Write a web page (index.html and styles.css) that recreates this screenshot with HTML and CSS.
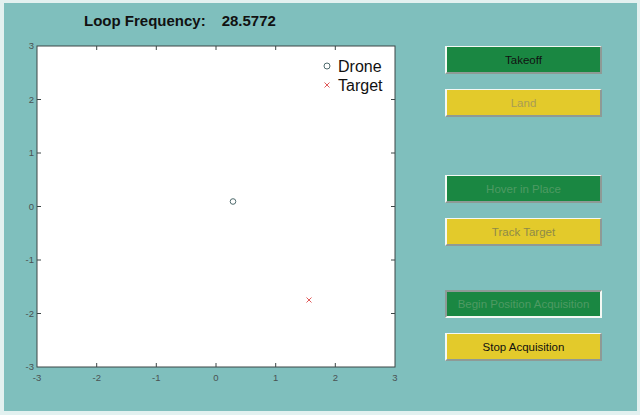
FILE: index.html
```html
<!DOCTYPE html>
<html>
<head>
<meta charset="utf-8">
<link rel="stylesheet" href="styles.css">
</head>
<body>
<div class="window">
  <div class="header">
    <span class="label">Loop Frequency:</span>
    <span class="value">28.5772</span>
  </div>
  <div class="main">
    <svg class="plot" width="416" height="345" viewBox="0 0 416 345">
      <rect x="33" y="6" width="358" height="321" fill="#ffffff" stroke="#3c4646" stroke-width="1"/>
      <g stroke="#3c4646" stroke-width="1">
        <line x1="92.7" y1="327" x2="92.7" y2="323"/>
        <line x1="152.3" y1="327" x2="152.3" y2="323"/>
        <line x1="212" y1="327" x2="212" y2="323"/>
        <line x1="271.7" y1="327" x2="271.7" y2="323"/>
        <line x1="331.3" y1="327" x2="331.3" y2="323"/>
        <line x1="92.7" y1="6" x2="92.7" y2="10"/>
        <line x1="152.3" y1="6" x2="152.3" y2="10"/>
        <line x1="212" y1="6" x2="212" y2="10"/>
        <line x1="271.7" y1="6" x2="271.7" y2="10"/>
        <line x1="331.3" y1="6" x2="331.3" y2="10"/>
        <line x1="33" y1="59.5" x2="37" y2="59.5"/>
        <line x1="33" y1="113" x2="37" y2="113"/>
        <line x1="33" y1="166.5" x2="37" y2="166.5"/>
        <line x1="33" y1="220" x2="37" y2="220"/>
        <line x1="33" y1="273.5" x2="37" y2="273.5"/>
        <line x1="391" y1="59.5" x2="387" y2="59.5"/>
        <line x1="391" y1="113" x2="387" y2="113"/>
        <line x1="391" y1="166.5" x2="387" y2="166.5"/>
        <line x1="391" y1="220" x2="387" y2="220"/>
        <line x1="391" y1="273.5" x2="387" y2="273.5"/>
      </g>
      <g class="ticklabel" text-anchor="end">
        <text x="30" y="9">3</text>
        <text x="30" y="62.5">2</text>
        <text x="30" y="116">1</text>
        <text x="30" y="169.5">0</text>
        <text x="30" y="223">-1</text>
        <text x="30" y="276.5">-2</text>
        <text x="30" y="330">-3</text>
      </g>
      <g class="ticklabel" text-anchor="middle">
        <text x="33" y="341">-3</text>
        <text x="92.7" y="341">-2</text>
        <text x="152.3" y="341">-1</text>
        <text x="212" y="341">0</text>
        <text x="271.7" y="341">1</text>
        <text x="331.3" y="341">2</text>
        <text x="391" y="341">3</text>
      </g>
      <circle cx="229" cy="161.5" r="2.8" fill="none" stroke="#4f6b6d" stroke-width="1"/>
      <g stroke="#e05a5a" stroke-width="1">
        <line x1="302.5" y1="257.5" x2="307.5" y2="262.5"/>
        <line x1="307.5" y1="257.5" x2="302.5" y2="262.5"/>
      </g>
      <circle cx="323" cy="26" r="3" fill="none" stroke="#4f6b6d" stroke-width="1"/>
      <text class="legend" x="334" y="32">Drone</text>
      <g stroke="#e05a5a" stroke-width="1">
        <line x1="320.5" y1="42.5" x2="325.5" y2="47.5"/>
        <line x1="325.5" y1="42.5" x2="320.5" y2="47.5"/>
      </g>
      <text class="legend" x="334" y="51">Target</text>
    </svg>
    <div class="controls">
      <div class="group g1">
        <div class="btn green active">Takeoff</div>
        <div class="btn yellow disabled-y">Land</div>
      </div>
      <div class="group g2">
        <div class="btn green disabled-g">Hover in Place</div>
        <div class="btn yellow disabled-y2">Track Target</div>
      </div>
      <div class="group g3">
        <div class="btn green disabled-g pressed">Begin Position Acquisition</div>
        <div class="btn yellow active">Stop Acquisition</div>
      </div>
    </div>
  </div>
</div>
</body>
</html>
```

FILE: styles.css
```css
html, body {
  margin: 0;
  padding: 0;
  background: #e3f1f0;
}
.window {
  box-sizing: border-box;
  width: 640px;
  height: 415px;
  border-left: 4px solid #e3f1f0;
  border-top: 3px solid #e3f1f0;
  border-right: 3px solid #e3f1f0;
  border-bottom: 4px solid #e3f1f0;
  background: #7fbfbd;
  display: flex;
  flex-direction: column;
  font-family: "Liberation Sans", Arial, sans-serif;
}
.header {
  height: 37px;
  display: flex;
  align-items: center;
  padding-left: 80px;
  padding-bottom: 3px;
  box-sizing: border-box;
  font-weight: bold;
  font-size: 15px;
  color: #111;
}
.header .value {
  margin-left: 16px;
}
.main {
  display: flex;
  flex-direction: row;
}
.plot {
  display: block;
  overflow: visible;
  flex: none;
}
.ticklabel text {
  font-family: "Liberation Sans", Arial, sans-serif;
  font-size: 9.5px;
  fill: #4a5252;
}
.legend {
  font-family: "Liberation Sans", Arial, sans-serif;
  font-size: 16px;
  fill: #111;
}
.controls {
  margin-left: 25px;
  padding-top: 6px;
  display: flex;
  flex-direction: column;
}
.group {
  display: flex;
  flex-direction: column;
  gap: 15px;
}
.g2 { margin-top: 58px; }
.g3 { margin-top: 44px; }
.btn {
  box-sizing: border-box;
  width: 157px;
  height: 28px;
  display: flex;
  align-items: center;
  justify-content: center;
  font-size: 11.5px;
  border-top: 1px solid #f4f8f4;
  border-left: 2px solid #f4f8f4;
  border-bottom: 2px solid #8e9a96;
  border-right: 2px solid #8e9a96;
}
.btn.pressed {
  border-top: 2px solid #8e9a96;
  border-left: 2px solid #8e9a96;
  border-bottom: 2px solid #f4f8f4;
  border-right: 2px solid #f4f8f4;
}
.green { background: #1a8742; }
.yellow { background: #e3ca2b; }
.active { color: #111; }
.disabled-y { color: #a89c55; }
.disabled-y2 { color: #8e8a48; }
.disabled-g { color: #4e9a62; }
```
